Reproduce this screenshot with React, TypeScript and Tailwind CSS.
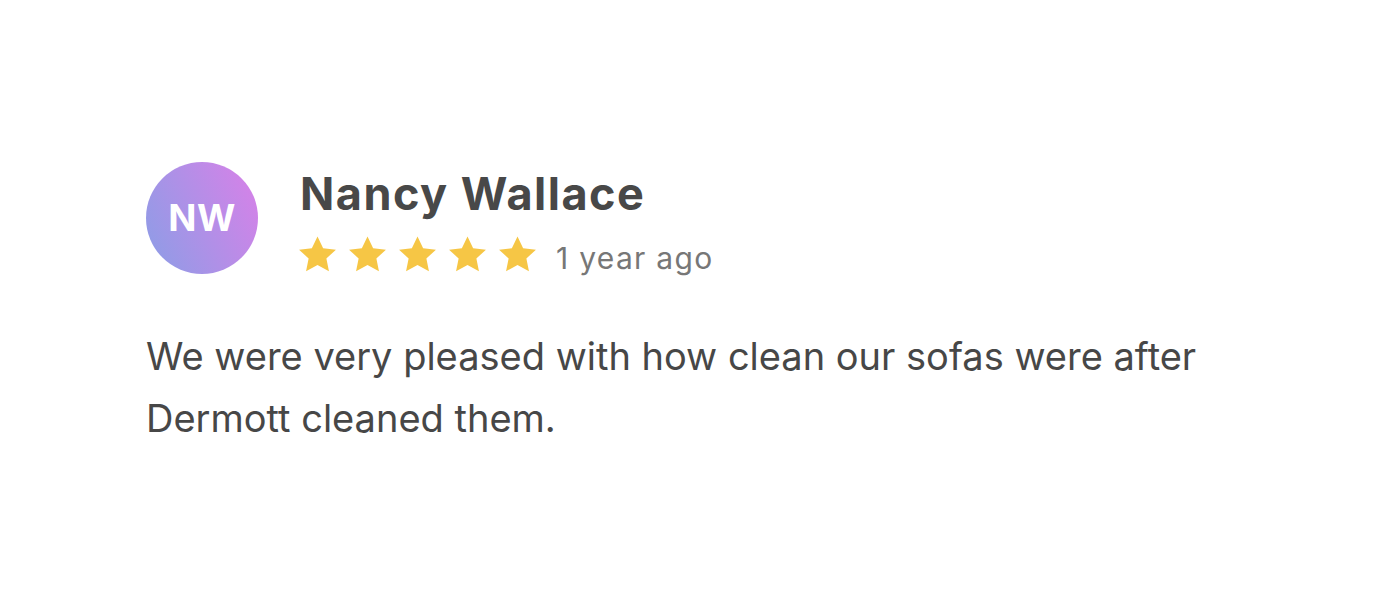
import React from 'react';

const Star = () => (
  <svg viewBox="0 0 24 24" className="w-[41px] h-[41px]" fill="#f6c645">
    <path d="M12 1.4l3.3 6.9 7.5.9-5.6 5.1 1.5 7.5L12 18.1l-6.7 3.7 1.5-7.5L1.2 9.2l7.5-.9z" />
  </svg>
);

const App: React.FC = () => {
  return (
    <div className="w-[1400px] h-[600px] bg-white font-['Inter',sans-serif]">
      <div className="pt-[162px] pl-[146px]">
        {/* Header */}
        <div className="flex items-start gap-[42px]">
          <div className="w-[112px] h-[112px] rounded-full bg-linear-[65deg] from-[#8a9ee6] to-[#da80e8] flex items-center justify-center">
            <span className="text-white font-bold text-[37px] tracking-[0.5px]">NW</span>
          </div>
          <div className="pt-[4px]">
            <h2 className="text-[45px] leading-[56px] font-bold tracking-[1.5px] text-[#484848]">Nancy Wallace</h2>
            <div className="flex items-center mt-[6px]">
              <div className="flex gap-[9px] -ml-[3px]">
                <Star />
                <Star />
                <Star />
                <Star />
                <Star />
              </div>
              <span className="ml-[18px] mt-[8px] text-[30px] tracking-[1.3px] text-[#777777]">1 year ago</span>
            </div>
          </div>
        </div>

        {/* Body */}
        <p className="mt-[44px] text-[38px] leading-[62px] text-[#474747] max-w-[1150px]">
          We were very pleased with how clean our sofas were after
          <br />
          Dermott cleaned them.
        </p>
      </div>
    </div>
  );
};

export default App;
